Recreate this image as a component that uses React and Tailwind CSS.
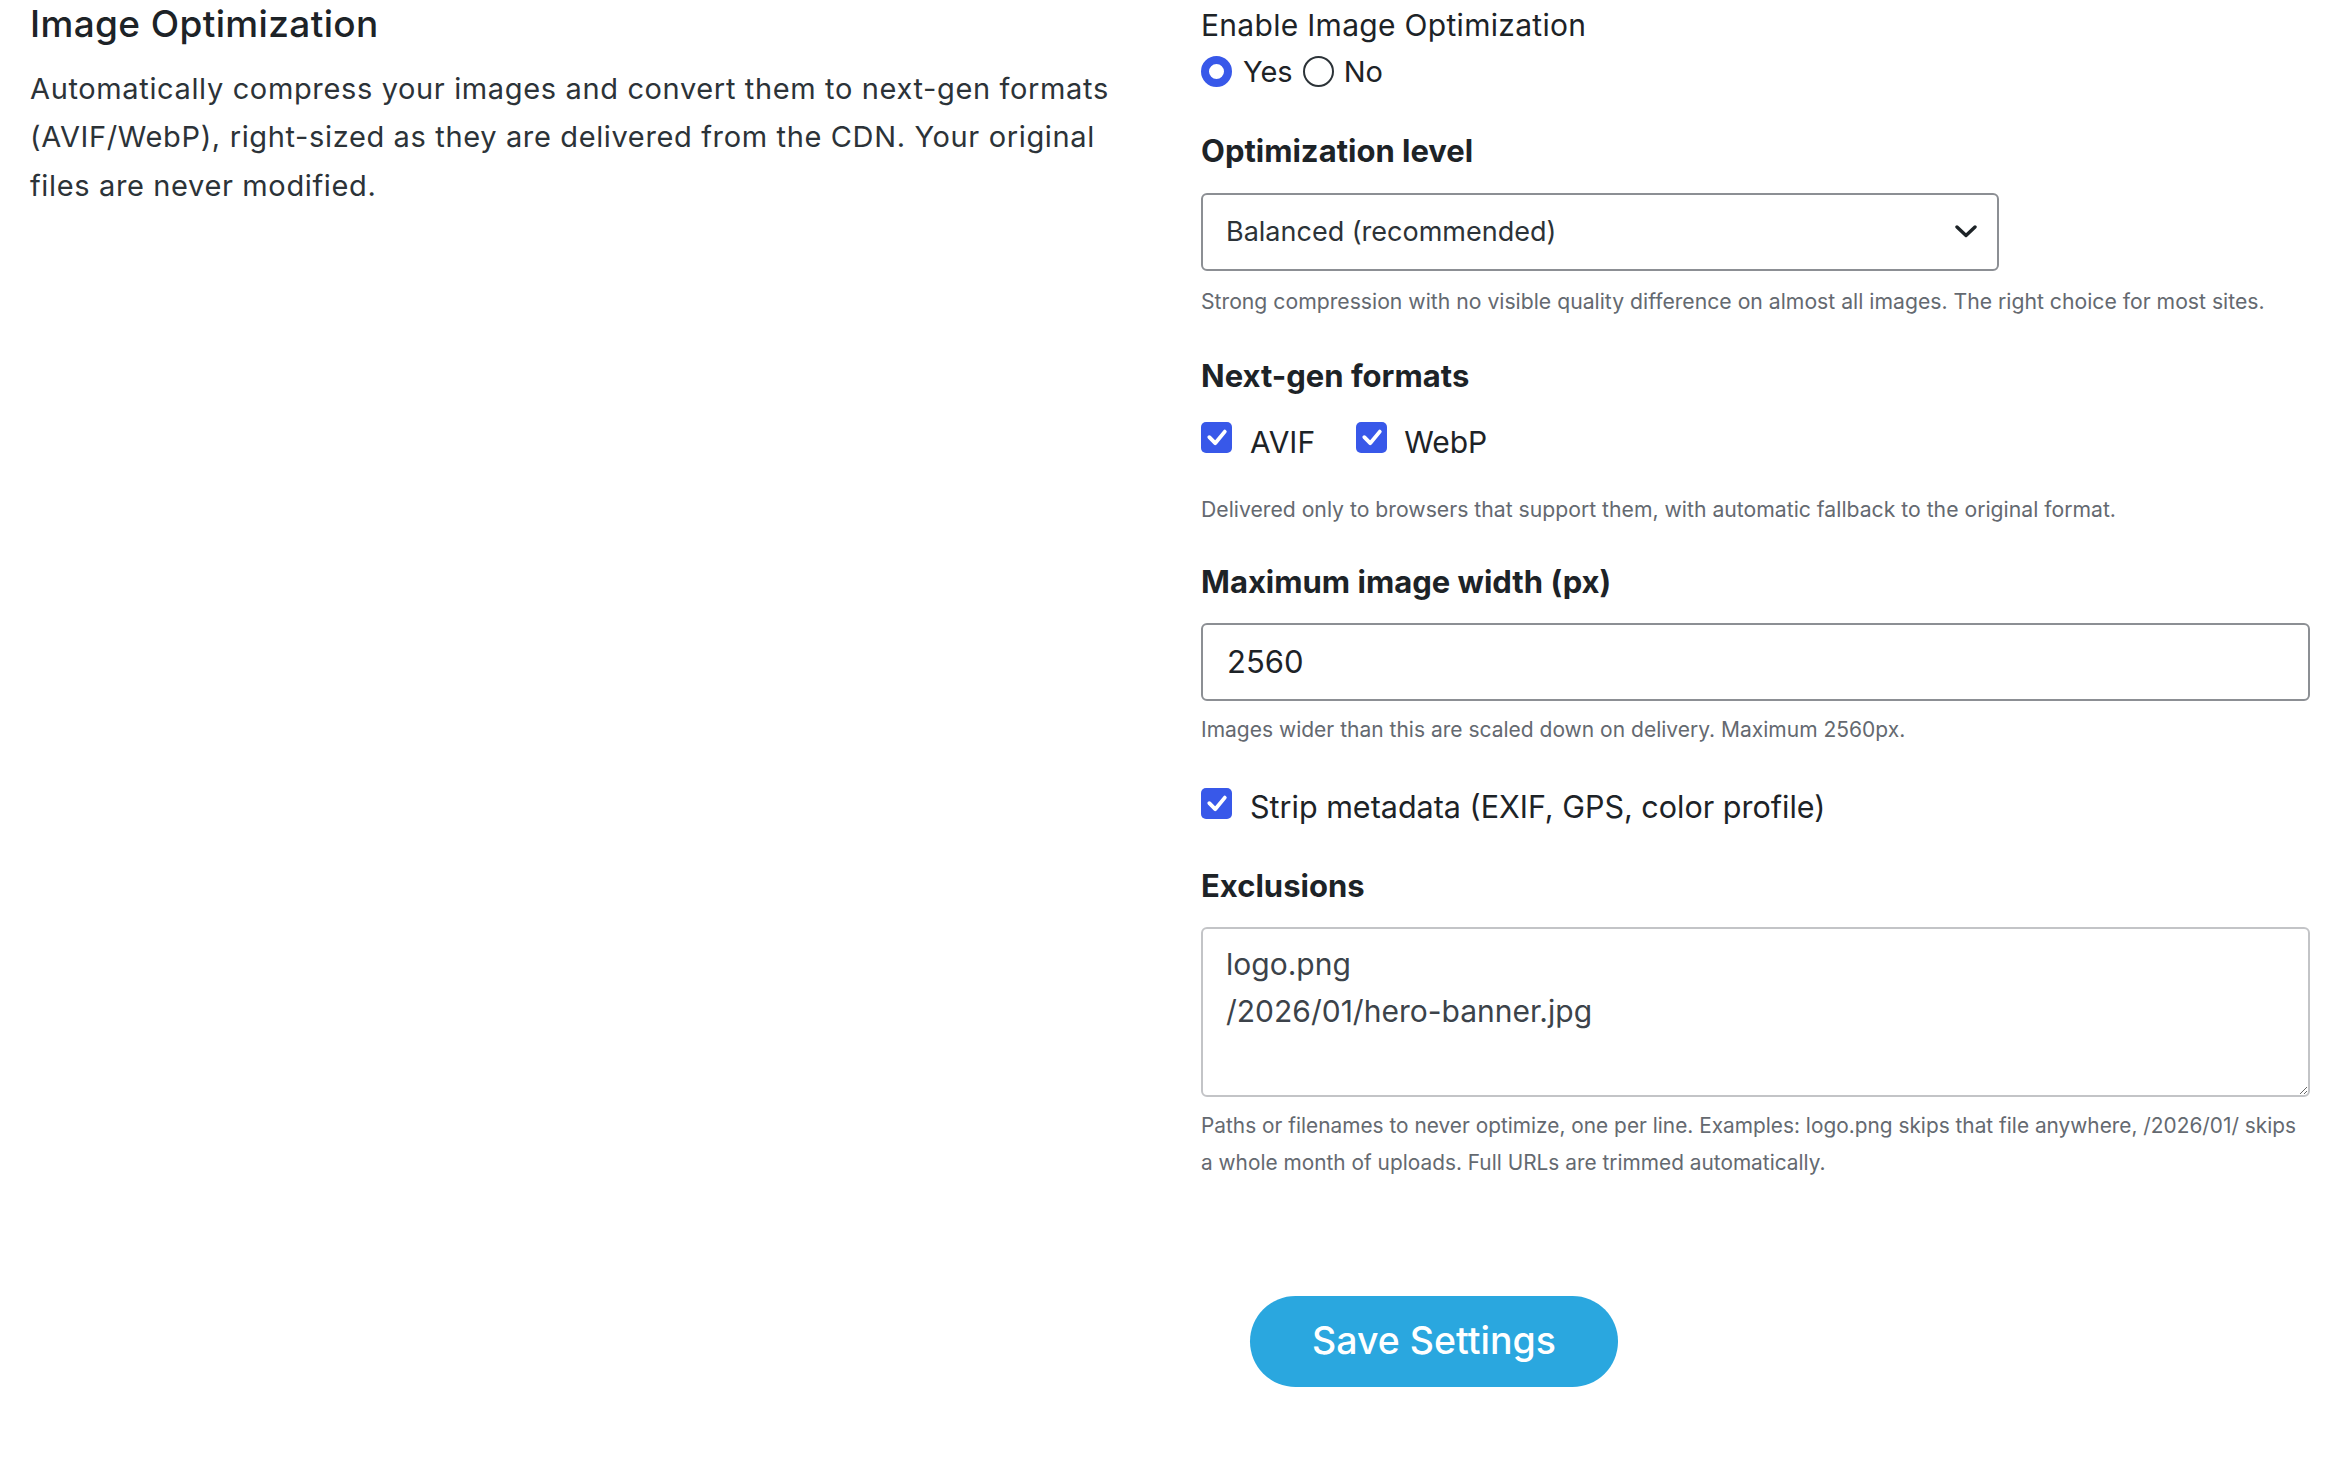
import React from "react";

function Checkbox() {
  return (
    <span className="flex h-[31px] w-[31px] shrink-0 items-center justify-center rounded-[5px] bg-[#3858e9]">
      <svg viewBox="0 0 31 31" className="h-[31px] w-[31px]" fill="none" stroke="#ffffff" strokeWidth="3.8" strokeLinecap="round" strokeLinejoin="round">
        <path d="M8.3 15.2 L14.2 21.2 L23.8 9.6" />
      </svg>
    </span>
  );
}

function RadioOn() {
  return <span className="block h-[31px] w-[31px] shrink-0 rounded-full border-[8px] border-[#3858e9] bg-white" />;
}

function RadioOff() {
  return <span className="block h-[31px] w-[31px] shrink-0 rounded-full border-2 border-[#2c3338] bg-white" />;
}

export default function App() {
  return (
    <div className="min-h-[1468px] w-full bg-white font-[Inter,sans-serif] text-[#1d2327]">
      <div className="flex gap-[62px] px-[30px]">
        <section className="w-[1109px] shrink-0">
          <h2 className="mt-[3.5px] text-[37px] font-medium leading-[40px] tracking-[0.01em] text-[#1d2327]">Image Optimization</h2>
          <p className="mt-[21px] text-[29px] leading-[48.5px] tracking-[0.022em] text-[#2c3338]">
            Automatically compress your images and convert them to next-gen formats (AVIF/WebP), right-sized as they are delivered from the CDN. Your original files are never modified.
          </p>
        </section>

        <section className="flex min-w-0 flex-1 flex-col">
          <div className="mt-[7.2px] text-[30px] leading-[36px] tracking-[0.01em] text-[#1d2327]">Enable Image Optimization</div>
          <div className="mt-[10.5px] flex h-[36px] items-center text-[29px] leading-[36px] text-[#1d2327]">
            <RadioOn />
            <span className="ml-[11px]">Yes</span>
            <span className="ml-[10px]"><RadioOff /></span>
            <span className="ml-[10px]">No</span>
          </div>

          <div className="mt-[43.7px] text-[31px] font-bold leading-[36px] text-[#1d2327]">Optimization level</div>
          <div className="mt-[23.3px] flex h-[78px] w-[798px] items-center justify-between rounded-[6px] border-2 border-[#8c8f94] pl-[23px] pr-[20px]">
            <span className="text-[27px] leading-[36px] text-[#2c3338]">Balanced (recommended)</span>
            <svg viewBox="0 0 22 13" className="h-[13px] w-[22px]" fill="none" stroke="#1d2327" strokeWidth="3.4" strokeLinecap="round" strokeLinejoin="round">
              <path d="M2 2 L11 10.5 L20 2" />
            </svg>
          </div>
          <div className="mt-[16.3px] text-[21.2px] leading-[28px] text-[#646970]">
            Strong compression with no visible quality difference on almost all images. The right choice for most sites.
          </div>

          <div className="mt-[43.4px] text-[31px] font-bold leading-[36px] text-[#1d2327]">Next-gen formats</div>
          <div className="mt-[27.4px] flex items-start text-[30px] leading-[36px] text-[#1d2327]">
            <Checkbox />
            <span className="ml-[18px] mt-[2px]">AVIF</span>
            <span className="ml-[41px]"><Checkbox /></span>
            <span className="ml-[17px] mt-[2px]">WebP</span>
          </div>
          <div className="mt-[35.3px] text-[21.2px] leading-[28px] text-[#646970]">
            Delivered only to browsers that support them, with automatic fallback to the original format.
          </div>

          <div className="mt-[41.4px] text-[31px] font-bold leading-[36px] text-[#1d2327]">Maximum image width (px)</div>
          <input
            readOnly
            defaultValue="2560"
            className="mt-[22.3px] h-[78px] w-full rounded-[6px] border-2 border-[#8c8f94] bg-white px-[24px] text-[31px] text-[#1d2327] outline-none"
          />
          <div className="mt-[15.3px] text-[21px] leading-[28px] text-[#646970]">
            Images wider than this are scaled down on delivery. Maximum 2560px.
          </div>

          <div className="mt-[43.7px] flex items-start text-[30.5px] leading-[36px] text-[#1d2327]">
            <Checkbox />
            <span className="ml-[18px] mt-[1px]">Strip metadata (EXIF, GPS, color profile)</span>
          </div>

          <div className="mt-[43.7px] text-[31px] font-bold leading-[36px] text-[#1d2327]">Exclusions</div>
          <textarea
            readOnly
            defaultValue={"logo.png\n/2026/01/hero-banner.jpg"}
            className="mt-[22.3px] block h-[170px] w-full resize-y rounded-[6px] border-2 border-[#c3c4c7] bg-white pl-[23px] pt-[12.6px] text-[30px] leading-[47px] text-[#3c434a] outline-none"
          />
          <div className="mt-[9.8px] text-[20.8px] leading-[37px] tracking-[0.001em] text-[#646970]">
            Paths or filenames to never optimize, one per line. Examples: logo.png skips that file anywhere, /2026/01/ skips a whole month of uploads. Full URLs are trimmed automatically.
          </div>

          <button
            type="button"
            className="ml-[49px] mt-[115.2px] h-[91px] w-[368px] self-start rounded-full bg-[#2aa7df] text-[37.5px] font-medium text-white"
          >
            Save Settings
          </button>
        </section>
      </div>
    </div>
  );
}
